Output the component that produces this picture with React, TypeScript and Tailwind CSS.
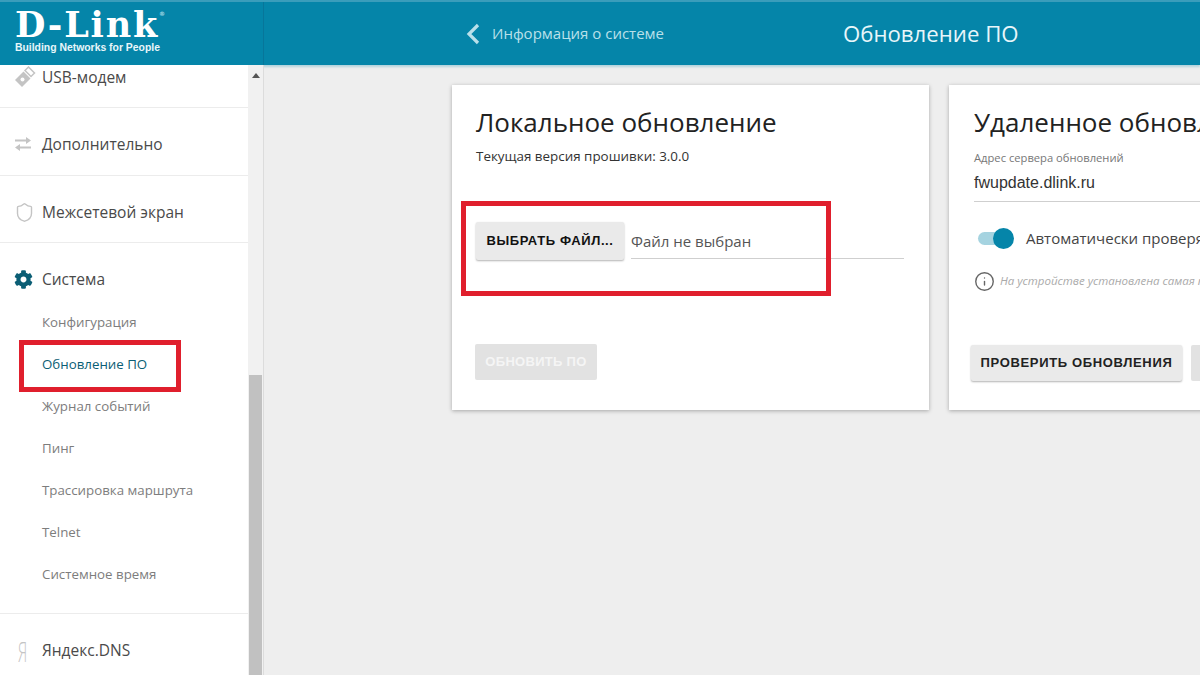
import React from 'react';
import { Info, Shield } from 'lucide-react';
import { FaCog } from 'react-icons/fa';

const font = "font-['Open_Sans','Noto_Sans',sans-serif]";
const btnFont = "font-['Liberation_Sans',Arial,sans-serif]";

function UsbIcon() {
  return (
    <svg width="22" height="22" viewBox="0 0 22 22" className="text-[#c4c4c4]">
      <path d="M1 14 9.500 5.500l7 7L8 21z" fill="currentColor" />
      <path d="M11 4.500 14.500 1l6 6L17 10.500z" fill="none" stroke="currentColor" strokeWidth="1.500" />
      <circle cx="8.500" cy="13.500" r="2" fill="#fff" />
    </svg>
  );
}

function ArrowsIcon() {
  return (
    <svg width="18" height="16" viewBox="0 0 18 16" fill="#c4c4c4">
      <path d="M1 3.500h11V1l5 3.500L12 8V5.500H1z" />
      <path d="M17 10.500H6V8l-5 3.500L6 15v-2.500h11z" />
    </svg>
  );
}

function MenuRow({ icon, label, className }: { icon: React.ReactNode; label: string; className: string }) {
  return (
    <div className={`flex items-center border-b border-[#ececec] pl-[14px] ${className}`}>
      <span className="flex w-[28px] shrink-0 items-center">{icon}</span>
      <span className="text-[15.500px] leading-[22px] text-[#4a4a4a]">{label}</span>
    </div>
  );
}

function SubItem({ label, active }: { label: string; active?: boolean }) {
  return (
    <div className={`relative flex h-[42px] items-center pl-[42px] text-[13.300px] ${active ? 'text-[#0b5e75]' : 'text-[#7d7d7d]'}`}>
      {label}
      {active && <div className="absolute left-[19px] top-[-4px] h-[52px] w-[162px] border-[5px] border-[#e01f2d]" />}
    </div>
  );
}

function Sidebar() {
  return (
    <aside className="flex h-full w-[264px] shrink-0 overflow-hidden border-r border-[#dcdcdc] bg-[#f1f1f1]">
      <div className="w-[248px] shrink-0 bg-white">
        <MenuRow className="h-[43px] items-start pt-[1px]" icon={<UsbIcon />} label="USB-модем" />
        <MenuRow className="h-[68px] pt-[4px]" icon={<ArrowsIcon />} label="Дополнительно" />
        <MenuRow className="h-[67px] pt-[6px]" icon={<Shield size={21} strokeWidth={1.6} className="text-[#c4c4c4]" />} label="Межсетевой экран" />
        <div className="flex h-[59px] items-center pl-[14px] pt-[13px]">
          <span className="flex w-[28px] items-center"><FaCog size={19} className="text-[#0b5e75]" /></span>
          <span className="text-[15.500px] leading-[22px] text-[#4a4a4a]">Система</span>
        </div>
        <div className="border-b border-[#ececec] pb-[17px]">
          <SubItem label="Конфигурация" />
          <SubItem label="Обновление ПО" active />
          <SubItem label="Журнал событий" />
          <SubItem label="Пинг" />
          <SubItem label="Трассировка маршрута" />
          <SubItem label="Telnet" />
          <SubItem label="Системное время" />
        </div>
        <div className="flex h-[74px] items-center pl-[18px]">
          <span className="w-[24px] origin-left scale-x-[0.55] text-[28px] font-light leading-none text-[#c4c4c4]">Я</span>
          <span className="text-[15.500px] text-[#4a4a4a]">Яндекс.DNS</span>
        </div>
      </div>
      <div className="flex w-[15px] flex-col items-center">
        <svg width="8" height="5" viewBox="0 0 8 5" className="mt-[8px] shrink-0"><path d="M4 0 8 5H0z" fill="#555" /></svg>
        <div className="mt-[297px] h-full w-[13px] shrink-0 bg-[#c1c1c1]" />
      </div>
    </aside>
  );
}

function Header() {
  return (
    <header className="flex h-[65px] shrink-0 border-t-2 border-[#3a9dbb] bg-[#0585a9] shadow-[0_2px_2px_rgba(5,133,169,0.25)]">
      <div className="flex w-[264px] shrink-0 flex-col border-r border-[#07769a] pl-[15px] pt-[7px] text-white">
        <div className="flex h-[31px] items-start font-['DejaVu_Serif',serif] text-[35px] font-bold leading-[31px] tracking-[1.800px]">
          D-Link
          <span className="text-[6px] leading-[10px] text-[#b5dfea]">®</span>
        </div>
        <div className="mt-[1px] font-['Liberation_Sans',sans-serif] text-[10.400px] font-bold leading-[13px] text-[#e8f6fa]">Building Networks for People</div>
      </div>
      <div className="flex flex-1 items-center pl-[202px]">
        <svg width="14" height="22" viewBox="0 0 14 22" fill="none" stroke="#b9e0ea" strokeWidth="3.200"><path d="M12 2 3 11l9 9" /></svg>
        <span className="ml-[12px] text-[15px] text-[#b9e0ea]">Информация о системе</span>
        <span className="ml-[179px] text-[22.200px] text-[#e8f6fa]">Обновление ПО</span>
      </div>
    </header>
  );
}

function LocalCard() {
  return (
    <section className="relative flex h-[325px] w-[477px] shrink-0 flex-col bg-white pl-[24px] pr-[25px] shadow-[0_1px_4px_rgba(0,0,0,0.3)]">
      <h2 className="mt-[19px] text-[26px] leading-[36px] text-[#222]">Локальное обновление</h2>
      <p className="mt-[7px] text-[13.400px] leading-[18px] text-[#333]">Текущая версия прошивки: 3.0.0</p>
      <div className="mt-[57px] flex items-start">
        <button className={`h-[38px] w-[148px] rounded-[2px] bg-[#eaeaea] text-[13px] font-bold tracking-[0.6px] text-[#111] shadow-[0_1px_2px_rgba(0,0,0,0.3)] ${btnFont}`}>ВЫБРАТЬ ФАЙЛ...</button>
        <div className="ml-[7px] h-[37px] flex-1 border-b border-[#cfcfcf] text-[15px] leading-[38px] text-[#555]">Файл не выбран</div>
      </div>
      <button className={`ml-[-1px] mt-[84px] h-[36px] w-[122px] rounded-[2px] bg-[#e2e2e2] text-[13px] font-bold tracking-[0.3px] text-[#f5f5f5] ${btnFont}`}>ОБНОВИТЬ ПО</button>
      <div className="absolute left-[9px] top-[116px] h-[95px] w-[370px] border-[5px] border-[#e01f2d]" />
    </section>
  );
}

function RemoteCard() {
  return (
    <section className="flex h-[325px] w-[477px] shrink-0 flex-col bg-white px-[25px] shadow-[0_1px_4px_rgba(0,0,0,0.3)]">
      <h2 className="mt-[19px] whitespace-nowrap text-[26px] leading-[36px] text-[#222]">Удаленное обновление</h2>
      <p className="mt-[11px] text-[11.200px] leading-[14px] text-[#777]">Адрес сервера обновлений</p>
      <div className="mt-[1px] h-[36px] border-b border-[#cfcfcf] font-['Liberation_Sans',sans-serif] text-[16px] leading-[34px] text-[#333]">fwupdate.dlink.ru</div>
      <div className="mt-[25px] flex h-[22px] items-center whitespace-nowrap">
        <div className="relative ml-[4px] h-[13px] w-[34px] rounded-full bg-[#a5d3e0]">
          <div className="absolute right-[-2px] top-[-4px] h-[21px] w-[21px] rounded-full bg-[#0585a9]" />
        </div>
        <span className="ml-[14px] text-[15px] text-[#444]">Автоматически проверять наличие обновлений</span>
      </div>
      <div className="mt-[21px] flex h-[22px] items-center whitespace-nowrap">
        <Info size={21} strokeWidth={1.6} className="text-[#666]" />
        <span className="ml-[5px] text-[11.500px] italic text-[#aaa]">На устройстве установлена самая последняя версия ПО</span>
      </div>
      <div className="ml-[-3px] mt-[53px] flex gap-[9px]">
        <button className={`h-[36px] w-[211px] shrink-0 rounded-[2px] bg-[#eaeaea] text-[13px] font-bold tracking-[0.65px] text-[#222] shadow-[0_1px_2px_rgba(0,0,0,0.3)] ${btnFont}`}>ПРОВЕРИТЬ ОБНОВЛЕНИЯ</button>
        <button className="h-[36px] w-[122px] shrink-0 rounded-[2px] bg-[#e2e2e2]" />
      </div>
    </section>
  );
}

export default function App() {
  return (
    <div className={`flex h-screen w-screen flex-col overflow-hidden bg-[#eeeeee] ${font}`}>
      <Header />
      <div className="flex min-h-0 flex-1">
        <Sidebar />
        <main className="flex flex-1 items-start gap-[20px] overflow-hidden pl-[188px] pt-[20px]">
          <LocalCard />
          <RemoteCard />
        </main>
      </div>
    </div>
  );
}
